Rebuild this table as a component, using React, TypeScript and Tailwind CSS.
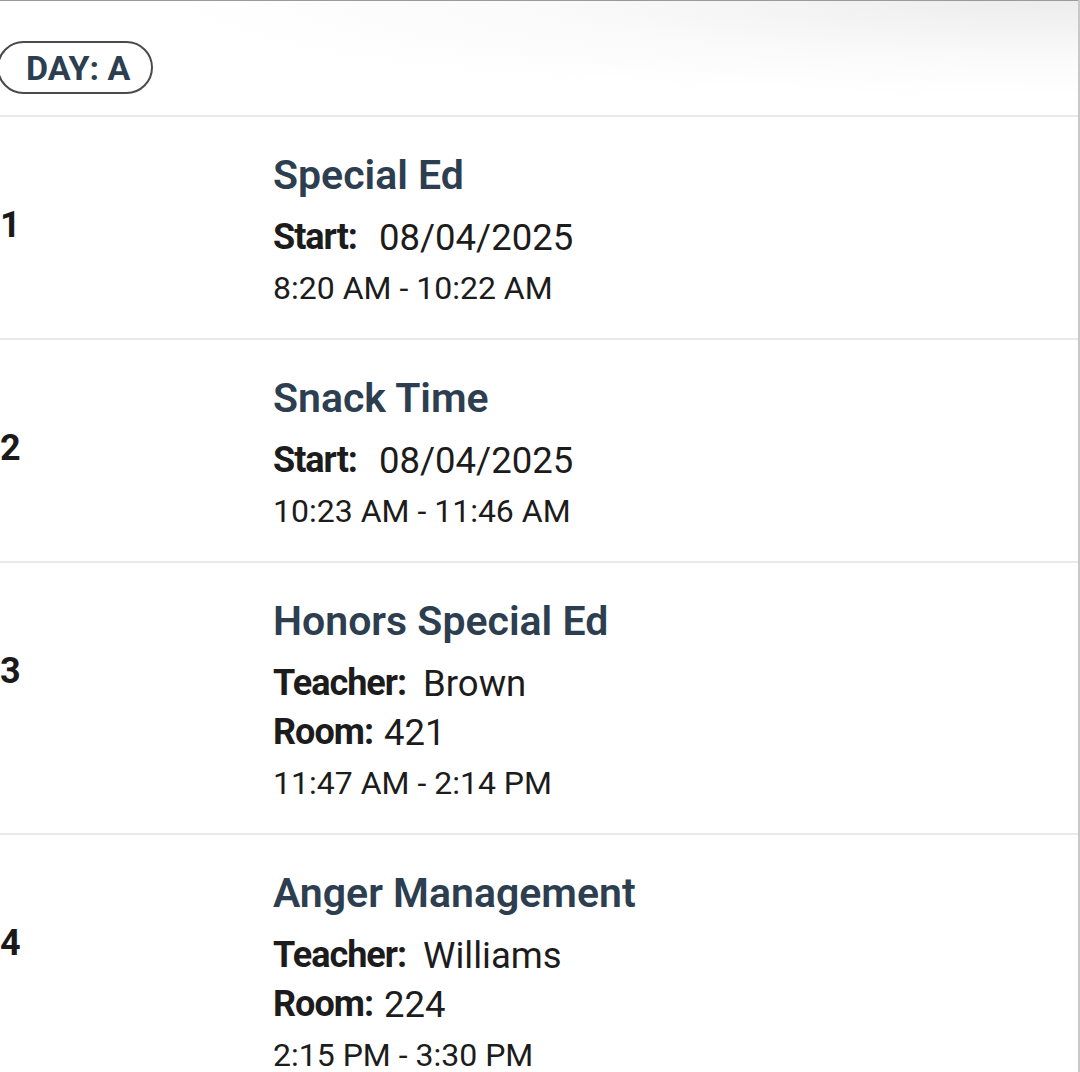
import React from "react";

type Row = {
  n: string;
  title: string;
  lines: { label: string; value: string; gap: string }[];
  time: string;
};

const rows: Row[] = [
  {
    n: "1",
    title: "Special Ed",
    lines: [{ label: "Start:", value: "08/04/2025", gap: "ml-[22px]" }],
    time: "8:20 AM - 10:22 AM",
  },
  {
    n: "2",
    title: "Snack Time",
    lines: [{ label: "Start:", value: "08/04/2025", gap: "ml-[22px]" }],
    time: "10:23 AM - 11:46 AM",
  },
  {
    n: "3",
    title: "Honors Special Ed",
    lines: [
      { label: "Teacher:", value: "Brown", gap: "ml-[17px]" },
      { label: "Room:", value: "421", gap: "ml-[11px]" },
    ],
    time: "11:47 AM - 2:14 PM",
  },
  {
    n: "4",
    title: "Anger Management",
    lines: [
      { label: "Teacher:", value: "Williams", gap: "ml-[17px]" },
      { label: "Room:", value: "224", gap: "ml-[11px]" },
    ],
    time: "2:15 PM - 3:30 PM",
  },
];

export default function App() {
  return (
    <div
      className="relative w-[1080px] h-[1072px] overflow-hidden bg-white border-r-2 border-[#c8c8c8]"
      style={{ fontFamily: "Roboto, 'Liberation Sans', sans-serif" }}
    >
      <div className="h-[115px] border-t border-[#9a9a9a] bg-[radial-gradient(ellipse_at_top_right,#ececec_0%,#fafafa_35%,#ffffff_60%)] pt-[40px]">
        <div className="ml-[-3px] inline-flex h-[53px] items-center rounded-full border-2 border-[#4a4a4a] pl-[27px] pr-[21px]">
          <span className="text-[34px] font-bold leading-none text-[#2c3e50]">
            DAY: A
          </span>
        </div>
      </div>
      {rows.map((r) => (
        <div
          key={r.n}
          className="flex border-t-2 border-[#e9e9e9] pt-[32px] pb-[24px]"
        >
          <div className="w-[273px] shrink-0">
            <div className="mt-[52px] text-[36px] font-bold leading-[49px] text-[#1a1a1a]">
              {r.n}
            </div>
          </div>
          <div className="flex flex-col">
            <div className="text-[41px] font-semibold leading-[52px] text-[#2c3e50]">
              {r.title}
            </div>
            <div className="mt-[12px] flex flex-col">
              {r.lines.map((l) => (
                <div
                  key={l.label}
                  className="flex text-[36px] leading-[49px] text-[#1c1c1c]"
                >
                  <span className="font-bold tracking-[-1px]">{l.label}</span>
                  <span className={`${l.gap} text-[36.5px]`}>{l.value}</span>
                </div>
              ))}
            </div>
            <div className="text-[32px] leading-[52px] text-[#1c1c1c]">
              {r.time}
            </div>
          </div>
        </div>
      ))}
    </div>
  );
}
